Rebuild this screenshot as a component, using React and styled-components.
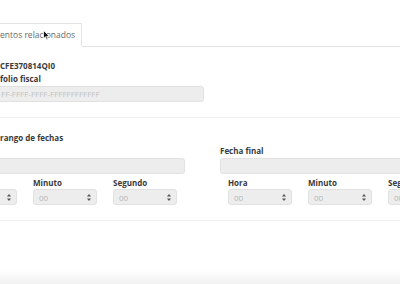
import React from "react";
import styled, { createGlobalStyle } from "styled-components";

const Global = createGlobalStyle`
  html, body { margin: 0; padding: 0; background: #fff; }
  * { box-sizing: border-box; }
`;

const Page = styled.div`
  position: relative;
  width: 400px;
  height: 284px;
  overflow: hidden;
  background: #fff;
  font-family: "Open Sans", "Liberation Sans", sans-serif;
  color: #333;
  display: flex;
  flex-direction: column;
`;

const TabBar = styled.div`
  margin-top: 23px;
  height: 24px;
  display: flex;
  border-bottom: 1px solid #e4e4e4;
`;

const Tab = styled.div`
  margin-left: -20px;
  width: 102px;
  height: 24px;
  margin-bottom: -1px;
  padding-left: 19px;
  border: 1px solid #e4e4e4;
  border-bottom-color: #fff;
  background: #fff;
  font-size: 8.5px;
  line-height: 21px;
  color: #6a6a6a;
  white-space: nowrap;
`;

const Section = styled.div`
  padding: ${(p) => p.$top}px 0 15px;
  border-top: ${(p) => (p.$line ? "1px solid #efefef" : "none")};
`;

const Label = styled.div`
  font-size: 8px;
  font-weight: 700;
  line-height: 13px;
  height: 13px;
  color: #3a3a3a;
  white-space: nowrap;
`;

const TextInput = styled.div`
  margin-top: 1px;
  margin-left: ${(p) => p.$offset || 0}px;
  width: ${(p) => p.$width}px;
  height: 16px;
  background: #ededed;
  border: 1px solid #e1e1e1;
  border-radius: 3px;
  font-size: 8px;
  line-height: 14px;
  color: #c2c2c2;
  padding-left: ${(p) => p.$pad || 0}px;
  white-space: nowrap;
  overflow: hidden;
`;

const Columns = styled.div`
  display: grid;
  grid-template-columns: 240px 240px;
  column-gap: 35px;
  margin-left: -55px;
`;

const Column = styled.div`
  display: flex;
  flex-direction: column;
`;

const TimeRow = styled.div`
  margin-top: 2px;
  margin-left: 8px;
  display: grid;
  grid-template-columns: repeat(3, 64px);
  column-gap: 16px;
`;

const TimeField = styled.div`
  display: flex;
  flex-direction: column;
`;

const Select = styled.div`
  height: 16px;
  background: #ededed;
  border: 1px solid #e1e1e1;
  border-radius: 3px;
  display: flex;
  align-items: center;
  justify-content: space-between;
  padding: 0 5px 0 5px;
  font-size: 8px;
  color: #b5b5b5;
`;

const Fade = styled.div`
  margin-top: auto;
  height: 14px;
  background: linear-gradient(#fff, #f1f1f1);
`;

const Cursor = styled.svg`
  position: absolute;
  left: 43px;
  top: 30px;
`;

const Arrows = () => (
  <svg width="4" height="7" viewBox="0 0 4 7">
    <path d="M2 0 L4 2.6 L0 2.6 Z" fill="#555" />
    <path d="M2 7 L4 4.4 L0 4.4 Z" fill="#555" />
  </svg>
);

const Time = ({ label }) => (
  <TimeField>
    <Label>{label}</Label>
    <Select>
      <span>00</span>
      <Arrows />
    </Select>
  </TimeField>
);

export default function App() {
  return (
    <>
      <Global />
      <Page>
        <TabBar>
          <Tab>entos relacionados</Tab>
        </TabBar>
        <Section $top={12}>
          <Label>CFE370814QI0</Label>
          <Label>folio fiscal</Label>
          <TextInput $offset={-60} $width={264} $pad={60}>
            FF-FFFF-FFFF-FFFFFFFFFFFF
          </TextInput>
        </Section>
        <Section $top={13} $line>
          <Label>rango de fechas</Label>
          <Columns>
            <Column>
              <Label />
              <TextInput $width={240} />
              <TimeRow>
                <Time label="Hora" />
                <Time label="Minuto" />
                <Time label="Segundo" />
              </TimeRow>
            </Column>
            <Column>
              <Label>Fecha final</Label>
              <TextInput $width={240} />
              <TimeRow>
                <Time label="Hora" />
                <Time label="Minuto" />
                <Time label="Segundo" />
              </TimeRow>
            </Column>
          </Columns>
        </Section>
        <Section $top={0} $line />
        <Fade />
        <Cursor width="7" height="11" viewBox="0 0 7 11">
          <path d="M0.5 0.5 L0.5 8.5 L2.4 6.7 L3.8 10 L5 9.4 L3.7 6.3 L6.3 6.3 Z" fill="#111" stroke="#fff" strokeWidth="0.8" />
        </Cursor>
      </Page>
    </>
  );
}
